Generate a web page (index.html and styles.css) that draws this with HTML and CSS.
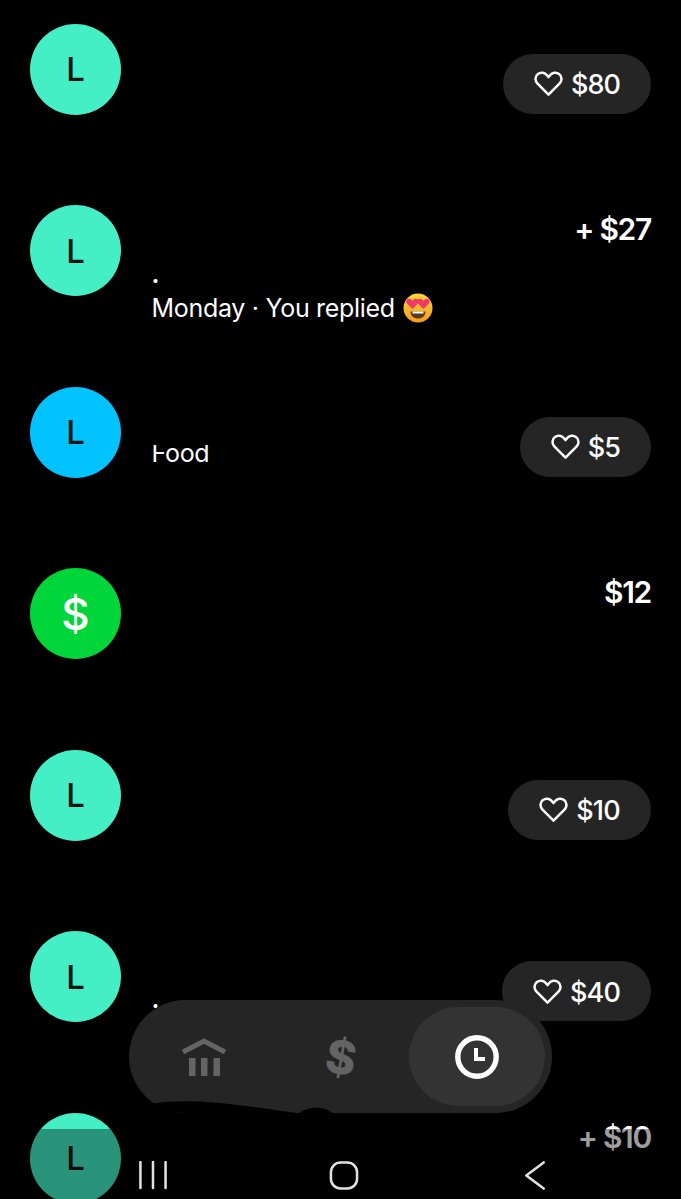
FILE: index.html
```html
<!DOCTYPE html>
<html lang="en">
<head>
<meta charset="utf-8">
<title>Activity</title>
<link rel="stylesheet" href="styles.css">
</head>
<body>
<main class="screen">
  <ul class="list">
    <li class="row">
      <div class="avatar mint">L</div>
      <div class="body"></div>
      <div class="pill pill-80"><svg class="heart" viewBox="0 0 30 26"><path d="M15 24.500 3.600 13.200C.6 10.100.9 5.600 4 3.200c3-2.200 7.200-1.600 9.500 1.300L15 6.300l1.500-1.800c2.300-2.900 6.500-3.500 9.500-1.300 3.100 2.400 3.400 6.900.4 10z"/></svg><span>$80</span></div>
    </li>
    <li class="row">
      <div class="avatar mint">L</div>
      <div class="body body-replied">
        <div class="dot">.</div>
        <div class="line">Monday · You replied <svg class="emoji" viewBox="0 0 30 30"><defs><linearGradient id="face" x1="0" y1="0" x2="0" y2="1"><stop offset="0" stop-color="#fdd835"/><stop offset="1" stop-color="#f59a23"/></linearGradient></defs><circle cx="15" cy="15" r="14.500" fill="url(#face)"/><path d="M7.500 18.500h15c0 4.500-3.400 7-7.500 7s-7.500-2.500-7.500-7z" fill="#5d3a1a"/><path d="M9.500 18.500h11v2h-11z" fill="#fff"/><path d="M9.500 16 4.300 10.800C2.500 8.800 3.300 6 5.600 5.700c1.700-.2 3 .6 3.900 2.100.9-1.500 2.200-2.300 3.900-2.100 2.300.3 3.100 3.100 1.300 5.100z" fill="#f0386b"/><path d="M20.500 16l-5.200-5.200c-1.800-2-1-4.800 1.300-5.100 1.700-.2 3 .6 3.900 2.100.9-1.500 2.200-2.300 3.900-2.100 2.300.3 3.100 3.100 1.300 5.100z" fill="#f0386b"/></svg></div>
      </div>
      <div class="amount">+ $27</div>
    </li>
    <li class="row">
      <div class="avatar blue">L</div>
      <div class="body body-food"><div class="clip"><div class="line">Food</div></div></div>
      <div class="pill pill-5"><svg class="heart" viewBox="0 0 30 26"><path d="M15 24.500 3.600 13.200C.6 10.100.9 5.600 4 3.200c3-2.200 7.200-1.600 9.500 1.300L15 6.300l1.500-1.800c2.300-2.900 6.500-3.500 9.500-1.300 3.100 2.400 3.400 6.900.4 10z"/></svg><span>$5</span></div>
    </li>
    <li class="row">
      <div class="avatar green">$</div>
      <div class="body"></div>
      <div class="amount">$12</div>
    </li>
    <li class="row">
      <div class="avatar mint">L</div>
      <div class="body"></div>
      <div class="pill pill-10"><svg class="heart" viewBox="0 0 30 26"><path d="M15 24.500 3.600 13.200C.6 10.100.9 5.600 4 3.200c3-2.200 7.200-1.600 9.500 1.300L15 6.300l1.500-1.800c2.300-2.900 6.500-3.500 9.500-1.300 3.100 2.400 3.400 6.900.4 10z"/></svg><span>$10</span></div>
    </li>
    <li class="row">
      <div class="avatar mint">L</div>
      <div class="body body-last"><div class="dot">.</div></div>
      <div class="pill pill-40"><svg class="heart" viewBox="0 0 30 26"><path d="M15 24.500 3.600 13.200C.6 10.100.9 5.600 4 3.200c3-2.200 7.200-1.600 9.500 1.300L15 6.300l1.500-1.800c2.300-2.900 6.500-3.500 9.500-1.300 3.100 2.400 3.400 6.900.4 10z"/></svg><span>$40</span></div>
    </li>
    <li class="row">
      <div class="avatar mint">L</div>
      <div class="body"></div>
      <div class="amount">+ $10</div>
    </li>
  </ul>

  <nav class="tabs">
    <div class="tab">
      <svg class="bank" viewBox="0 0 46 40"><path class="roof" d="M2 15 23 4l21 11"/><rect x="8" y="21" width="6.500" height="18"/><rect x="20" y="21" width="6.500" height="18"/><rect x="32.500" y="21" width="6.500" height="18"/></svg>
    </div>
    <div class="tab"><span class="tab-dollar">$</span></div>
    <div class="tab tab-active">
      <svg class="clock" viewBox="0 0 44 44"><circle cx="22" cy="22" r="19.200"/><path d="M21 13v11h9"/></svg>
    </div>
    <svg class="notch" viewBox="0 0 423 30"><path d="M25 20.500C40 18 60 17.500 85 19.500 115 22 145 27 168 30h3c5-6 25-8 32 0H0V20z"/></svg>
  </nav>

  <div class="sysbar">
    <svg class="sys sys-recents" viewBox="0 0 30 30"><path d="M2 1v27M15 1v27M28 1v27"/></svg>
    <svg class="sys sys-home" viewBox="0 0 30 30"><rect x="1.500" y="1.500" width="27" height="27" rx="10"/></svg>
    <svg class="sys sys-back" viewBox="0 0 22 30"><path d="M20 1.500 2 15l18 13.500"/></svg>
  </div>
</main>
</body>
</html>
```
FILE: styles.css
```css
* { box-sizing: border-box; }
html, body { margin: 0; padding: 0; background: #000; }
.screen {
  position: relative;
  width: 681px;
  height: 1199px;
  overflow: hidden;
  background: #000;
  color: #fff;
  font-family: Inter, "Liberation Sans", sans-serif;
}
.list {
  list-style: none;
  margin: 0;
  padding: 23.5px 30px 0;
  display: grid;
  grid-auto-rows: 181.5px;
}
.row { display: flex; align-items: flex-start; }
.avatar {
  flex: none;
  width: 91px;
  height: 91px;
  border-radius: 50%;
  display: flex;
  align-items: center;
  justify-content: center;
  color: #04150f;
  font-size: 33px;
  font-weight: 500;
}
.mint { background: #45efc5; }
.blue { background: #00c3ff; }
.green { background: #00d639; color: #fff; font-size: 44px; font-weight: 500; }
.body {
  flex: 1;
  margin-left: 30.500px;
  font-size: 25px;
  letter-spacing: -0.3px;
}
.line { line-height: 32px; white-space: nowrap; }
.dot { line-height: 32px; height: 34px; font-weight: 600; }
.body-replied { padding-top: 53px; }
.body-food { padding-top: 58px; }
.body-last { padding-top: 52px; }
.clip { height: 20px; overflow: hidden; }
.clip .line { margin-top: -8px; }
.emoji { width: 30px; height: 30px; vertical-align: -6px; margin-left: 1px; }
.amount {
  margin-top: 6px;
  font-size: 30px;
  line-height: 36px;
  font-weight: 600;
  letter-spacing: -1.300px;
  white-space: nowrap;
}
.pill {
  flex: none;
  margin-top: 30px;
  height: 60px;
  border-radius: 30px;
  background: #252525;
  display: flex;
  align-items: center;
  justify-content: center;
  gap: 8px;
  font-size: 27px;
  font-weight: 500;
  letter-spacing: -0.9px;
}
.pill span { position: relative; top: 1px; }
.pill-80 { width: 148px; }
.pill-5 { width: 131px; }
.pill-10 { width: 143px; }
.pill-40 { width: 149px; }
.heart {
  width: 29px;
  height: 25px;
  fill: none;
  stroke: #fff;
  stroke-width: 2.600;
  stroke-linejoin: round;
  flex: none;
}
.tabs {
  position: absolute;
  left: 129px;
  top: 1000px;
  width: 423px;
  height: 113px;
  border-radius: 56.500px;
  background: #252525;
  padding: 7px;
  display: flex;
  align-items: center;
  overflow: hidden;
}
.tab {
  flex: 1;
  height: 99px;
  display: flex;
  align-items: center;
  justify-content: center;
}
.tab-active {
  flex: none;
  width: 136px;
  border-radius: 49.500px;
  background: #333;
}
.bank { width: 46px; height: 40px; fill: #646464; }
.roof { fill: none; stroke: #646464; stroke-width: 5; }
.tab-dollar {
  color: #646464;
  font-size: 46px;
  line-height: 1;
  font-weight: 800;
  transform: rotate(10deg);
}
.clock { width: 44px; height: 44px; fill: none; stroke: #fff; }
.clock circle { stroke-width: 5.400; }
.clock path { stroke-width: 4; }
.notch {
  position: absolute;
  left: 0;
  bottom: 0;
  width: 423px;
  height: 30px;
  fill: #000;
}
.sysbar {
  position: absolute;
  left: 0;
  right: 0;
  top: 1129px;
  height: 70px;
  background: rgba(0, 0, 0, 0.38);
}
.sys {
  position: absolute;
  top: 32px;
  height: 29px;
  fill: none;
  stroke: #e2e2e2;
  stroke-width: 2.600;
  stroke-linecap: round;
  stroke-linejoin: round;
}
.sys-recents { left: 138px; width: 30px; }
.sys-home { left: 329px; width: 30px; }
.sys-back { left: 524px; width: 22px; }
```
